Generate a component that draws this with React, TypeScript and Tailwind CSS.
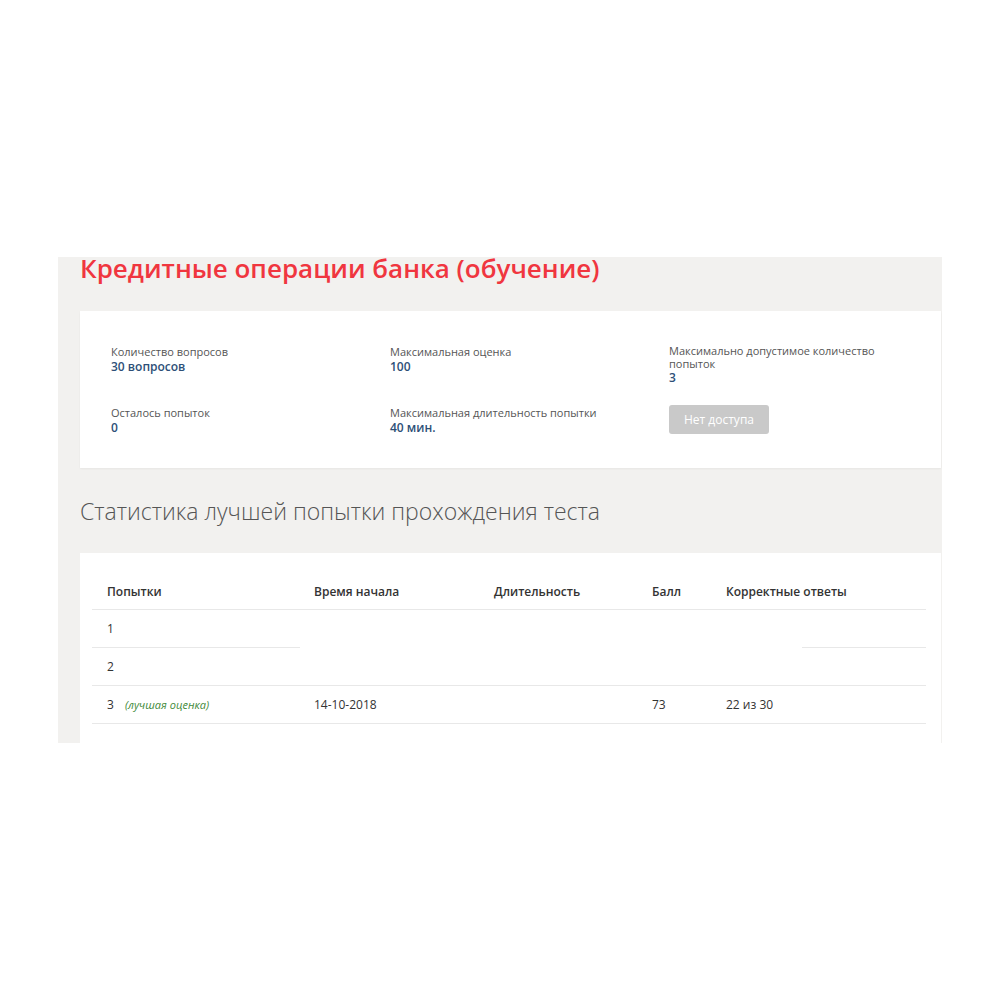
const INFO = [
  [
    { label: "Количество вопросов", value: "30 вопросов" },
    { label: "Осталось попыток", value: "0" },
  ],
  [
    { label: "Максимальная оценка", value: "100" },
    { label: "Максимальная длительность попытки", value: "40 мин." },
  ],
];

const COLS = ["w-[207px]", "w-[180px]", "w-[158px]", "w-[74px]", "flex-1"];
const HEAD = ["Попытки", "Время начала", "Длительность", "Балл", "Корректные ответы"];

function Cell({ i, children }: { i: number; children?: React.ReactNode }) {
  return <div className={`${COLS[i]} pl-[15px]`}>{children}</div>;
}

export default function App() {
  return (
    <div className="min-h-[1000px] w-[1000px] bg-white pl-[58px] pt-[257px] font-['Open_Sans',sans-serif]">
      <div className="flow-root h-[486px] w-[884px] bg-[#f2f1ef] pl-[22px]">
        <h1 className="-mt-[5px] h-[59px] text-[26px] font-semibold leading-[32px] text-[#f0363f]">
          Кредитные операции банка (обучение)
        </h1>

        <div className="h-[157px] w-[861px] bg-white pl-[31px] pt-[33px] shadow-[0_1px_2px_rgba(0,0,0,0.05)]">
          <div className="flex">
            {INFO.map((col, ci) => (
              <div key={ci} className="flex w-[279px] flex-col gap-[31px]">
                {col.map((it) => (
                  <div key={it.label} className="leading-[15px]">
                    <div className="text-[11px] text-[#555]">{it.label}</div>
                    <div className="text-[12px] font-semibold text-[#2d4f77]">{it.value}</div>
                  </div>
                ))}
              </div>
            ))}
            <div className="flex flex-col">
              <div className="w-[210px] text-[11px] leading-[13px] text-[#555]">
                Максимально допустимое количество попыток
              </div>
              <div className="text-[12px] font-semibold leading-[15px] text-[#2d4f77]">3</div>
              <button className="mt-[20px] h-[29px] w-[100px] rounded-[3px] bg-[#c9c9c9] text-[12px] text-white">
                Нет доступа
              </button>
            </div>
          </div>
        </div>

        <h2 className="pt-[28px] text-[23px] font-light leading-[30px] text-[#555]">
          Статистика лучшей попытки прохождения теста
        </h2>

        <div className="mt-[27px] h-[190px] w-[861px] bg-white pl-[12px] pr-[15px] pt-[24px] text-[12px] text-[#333]">
          <div className="flex h-[32px] items-center pb-[2px] font-semibold">
            {HEAD.map((h, i) => (
              <Cell key={h} i={i}>
                {h}
              </Cell>
            ))}
          </div>
          <div className="h-px bg-[#e8e8e8]" />
          <div className="flex h-[37px] items-center">
            <Cell i={0}>1</Cell>
          </div>
          <div className="flex h-px">
            <div className="w-[208px] bg-[#e8e8e8]" />
            <div className="flex-1" />
            <div className="w-[124px] bg-[#e8e8e8]" />
          </div>
          <div className="flex h-[37px] items-center">
            <Cell i={0}>2</Cell>
          </div>
          <div className="h-px bg-[#e8e8e8]" />
          <div className="flex h-[37px] items-center">
            <Cell i={0}>
              3 <span className="ml-[8px] text-[11px] italic text-[#3f8a3a]">(лучшая оценка)</span>
            </Cell>
            <Cell i={1}>14-10-2018</Cell>
            <Cell i={2} />
            <Cell i={3}>73</Cell>
            <Cell i={4}>22 из 30</Cell>
          </div>
          <div className="h-px bg-[#e8e8e8]" />
        </div>
      </div>
    </div>
  );
}
